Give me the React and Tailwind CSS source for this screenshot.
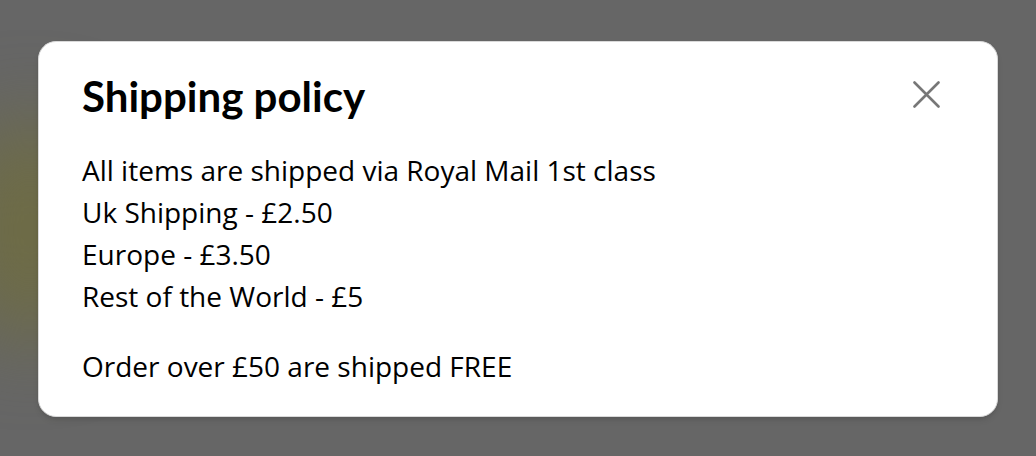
export default function App() {
  return (
    <div className="relative flex h-[456px] w-full items-start justify-center overflow-hidden bg-[#666666] pt-[41px]">
      {/* blurred page content behind the overlay */}
      <div className="absolute left-[-40px] top-[120px] h-[220px] w-[140px] rounded-full bg-[#6e6c45] blur-2xl" />
      <div className="relative w-[960px] rounded-[18px] border border-[#d9d9d9] bg-white pb-[29px] pl-[43px] pr-[57px] pt-[29px] shadow-md">
        <div className="flex items-start justify-between">
          <h2 className="text-[42px] font-bold leading-[50px] text-black" style={{ fontFamily: "Lato, sans-serif" }}>
            Shipping policy
          </h2>
          <button type="button" aria-label="Close" className="mt-[10px] text-[#777777]">
            <svg width="27" height="27" viewBox="0 0 27 27" fill="none" stroke="currentColor" strokeWidth="2.6" strokeLinecap="round">
              <path d="M1.5 1.5L25.5 25.5M25.5 1.5L1.5 25.5" />
            </svg>
          </button>
        </div>
        <div className="mt-[28px] text-[28px] leading-[42px] text-black" style={{ fontFamily: '"Open Sans", sans-serif' }}>
          <p>All items are shipped via Royal Mail 1st class</p>
          <p>Uk Shipping - £2.50</p>
          <p>Europe - £3.50</p>
          <p>Rest of the World - £5</p>
          <p className="mt-[28px]">Order over £50 are shipped FREE</p>
        </div>
      </div>
    </div>
  );
}
